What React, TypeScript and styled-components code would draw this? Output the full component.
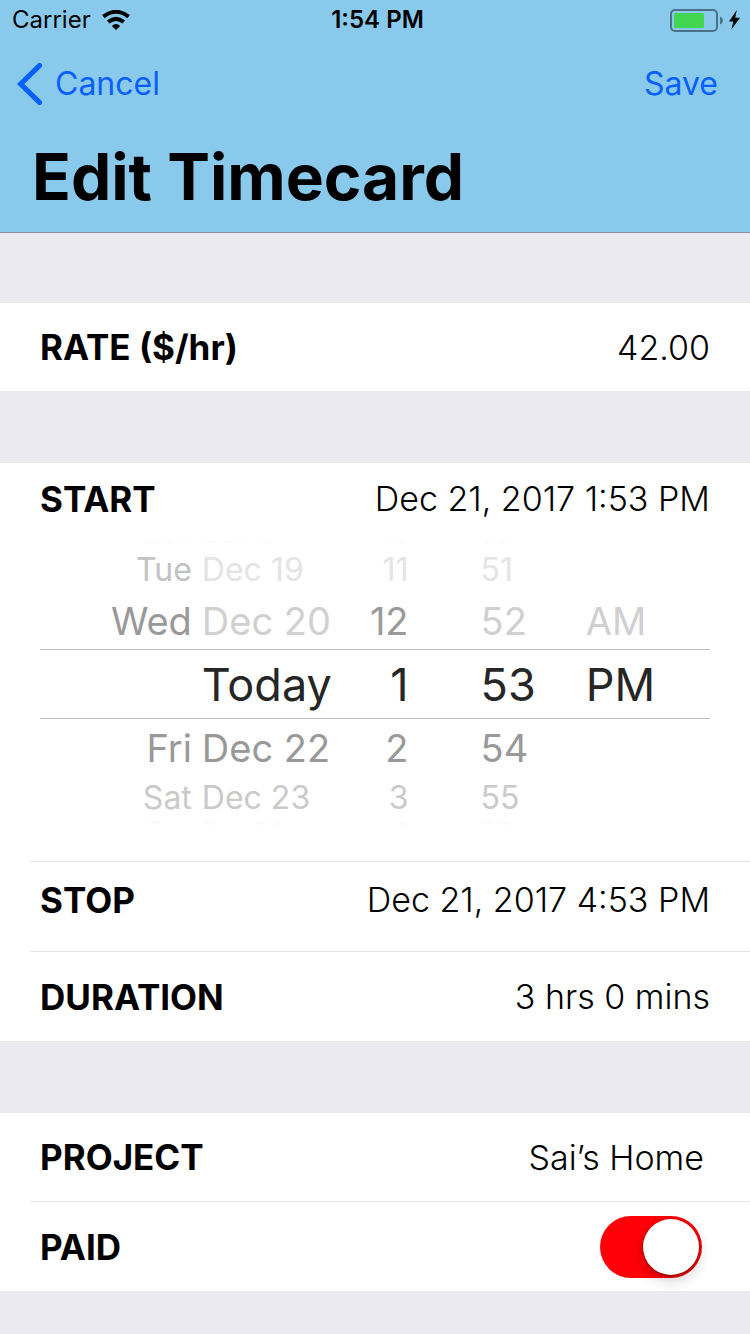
import React, { useState } from "react";
import styled, { createGlobalStyle } from "styled-components";

const GlobalStyle = createGlobalStyle`
  *, *::before, *::after { box-sizing: border-box; }
  body {
    margin: 0;
    background: #ebeaf0;
    color: #000;
    font-family: Inter, Roboto, "Liberation Sans", sans-serif;
  }
  button, input { font: inherit; color: inherit; }
`;

const Header = styled.header`
  background: #89caec;
  border-bottom: 1px solid #8e909c;
`;

const StatusBar = styled.div`
  display: grid;
  grid-template-columns: 1fr auto 1fr;
  align-items: center;
  height: 40px;
  padding: 0 9px 0 12px;
  font-size: 24px;
  line-height: 40px;
`;

const Carrier = styled.div`
  display: flex;
  align-items: center;
  gap: 11px;
`;

const Clock = styled.div`
  padding-left: 2px;
  font-weight: 600;
`;

const Power = styled.div`
  display: flex;
  justify-content: flex-end;
`;

const NavBar = styled.nav`
  display: flex;
  align-items: center;
  justify-content: space-between;
  height: 88px;
  padding: 0 32px 0 16px;
`;

const NavButton = styled.button`
  display: flex;
  align-items: center;
  gap: 12px;
  padding: 0;
  border: 0;
  background: none;
  color: #0a60ff;
  font-size: 32px;
  line-height: 44px;
  cursor: pointer;
`;

const Title = styled.h1`
  margin: 0;
  padding: 9px 32px 15px;
  font-size: 64px;
  font-weight: 700;
  line-height: 80px;
`;

const Form = styled.main`
  display: flex;
  flex-direction: column;
  gap: 72px;
  padding: 70px 0 43px;
`;

const Section = styled.section`
  background: #fff;
`;

const Row = styled.div<{ $tall?: boolean }>`
  display: flex;
  align-items: center;
  justify-content: space-between;
  gap: 24px;
  height: ${(p) => (p.$tall ? 89 : 88)}px;
  padding: 0 40px;
`;

const DateRow = styled(Row)<{ $open?: boolean }>`
  height: ${(p) => (p.$open ? 72 : 89)}px;
  padding-bottom: ${(p) => (p.$open ? 0 : 14)}px;
`;

const Divider = styled.hr`
  height: 1px;
  margin: 0 0 0 30px;
  border: 0;
  background: #e6e6ea;
`;

const Label = styled.label`
  flex: none;
  font-size: 35px;
  font-weight: 700;
  line-height: 44px;
`;

const Value = styled.output`
  font-size: 34px;
  font-weight: 300;
  line-height: 44px;
  white-space: nowrap;
`;

const Field = styled.input<{ $inset?: boolean }>`
  flex: 1;
  min-width: 0;
  height: 44px;
  padding: 0 ${(p) => (p.$inset ? 6 : 0)}px 0 0;
  border: 0;
  outline: 0;
  background: none;
  font-size: 34px;
  font-weight: 300;
  text-align: right;
`;

const Picker = styled.div`
  display: grid;
  grid-template-columns: 295fr 75fr 125fr 175fr;
  padding: 6px 40px 36px;
`;

const Wheel = styled.div<{ $inset?: number }>`
  display: flex;
  flex-direction: column;
  & > button { padding-left: ${(p) => p.$inset || 0}px; }
`;

const levels = [
  { height: 6, size: 24 },
  { height: 45, size: 32 },
  { height: 57, size: 38 },
  { height: 70, size: 45 },
  { height: 57, size: 38 },
  { height: 43, size: 32 },
  { height: 6, size: 24 },
];

const Cell = styled.button<{ $level: number; $tone: string; $align?: "right" }>`
  display: flex;
  align-items: ${(p) => (p.$level === 0 ? "flex-end" : p.$level === 6 ? "flex-start" : "center")};
  justify-content: ${(p) => (p.$align === "right" ? "flex-end" : "flex-start")};
  height: ${(p) => levels[p.$level].height}px;
  padding: 0;
  overflow: hidden;
  border: 0 solid #bebebe;
  border-width: ${(p) => (p.$level === 3 ? "1px 0" : "0")};
  background: none;
  color: ${(p) => p.$tone};
  font-size: ${(p) => levels[p.$level].size}px;
  line-height: 1;
  white-space: nowrap;
`;

const Weekday = styled.span<{ $tone: string }>`
  flex: 1;
  padding-right: 10px;
  color: ${(p) => p.$tone};
  text-align: right;
`;

const Day = styled.span`
  flex: 0 0 132px;
  text-align: left;
`;

const Switch = styled.input`
  appearance: none;
  position: relative;
  width: 102px;
  height: 62px;
  margin: 0 8px 0 0;
  border-radius: 31px;
  background: #ff0008;
  cursor: pointer;

  &::after {
    content: "";
    position: absolute;
    top: 3px;
    left: 3px;
    width: 56px;
    height: 56px;
    border-radius: 50%;
    background: #fff;
    box-shadow: 0 1px 3px rgba(0, 0, 0, 0.45), 0 6px 14px rgba(0, 0, 0, 0.18);
  }
  &:checked::after { left: 43px; }
  &:not(:checked) { background: #e5e5ea; }
`;

const WifiIcon = () => (
  <svg width="28" height="20" viewBox="0 0 28 20" aria-hidden="true">
    <path d="M1.4 6.6 Q14 -3 26.6 6.6" fill="none" stroke="#000" strokeWidth="4" />
    <path d="M6.2 12 Q14 5.8 21.8 12" fill="none" stroke="#000" strokeWidth="4" />
    <path d="M9.8 16 Q14 11.8 18.2 16 L14 20 Z" fill="#000" />
  </svg>
);

const BatteryIcon = () => (
  <svg width="71" height="24" viewBox="0 0 71 24" aria-hidden="true">
    <rect x="1" y="2" width="46" height="21" rx="4" fill="none" stroke="#4d7184" strokeWidth="2" />
    <rect x="4" y="5" width="30" height="15" rx="1.5" fill="#43d651" />
    <path d="M50 8.5 Q53 10 53 12.5 Q53 15 50 16.5 Z" fill="#4d7184" />
    <path d="M66.8 2 L59 13.4 H63.4 L61.4 21.6 L70 9.8 H65.2 Z" fill="#000" />
  </svg>
);

const BackIcon = () => (
  <svg width="27" height="44" viewBox="0 0 27 44" aria-hidden="true">
    <path d="M23.5 3.6 L4.7 22 L23.5 40.4" fill="none" stroke="#0a60ff" strokeWidth="5.2" strokeLinecap="round" />
  </svg>
);

const ghost = "#fafafa";
const ink = "#262626";

const dates = [
  { weekday: "Mon", day: "Dec 18", dayTone: "#fcfcfc", tone: ghost },
  { weekday: "Tue", day: "Dec 19", dayTone: "#e4e4e4", tone: "#c2c2c2" },
  { weekday: "Wed", day: "Dec 20", dayTone: "#d0d0d0", tone: "#999999" },
  { weekday: "", day: "Today", dayTone: ink, tone: ink },
  { weekday: "Fri", day: "Dec 22", dayTone: "#999999", tone: "#999999" },
  { weekday: "Sat", day: "Dec 23", dayTone: "#cacaca", tone: "#cacaca" },
  { weekday: "Sun", day: "Dec 24", dayTone: ghost, tone: ghost },
];
const hours = ["10", "11", "12", "1", "2", "3", "4"];
const hourTones = [ghost, "#e4e4e4", "#999999", ink, "#999999", "#cacaca", ghost];
const minutes = ["50", "51", "52", "53", "54", "55", "56"];
const minuteTones = [ghost, "#e4e4e4", "#d0d0d0", ink, "#999999", "#cacaca", ghost];
const periods = ["", "", "AM", "PM", "", "", ""];

const DateTimePicker = () => (
  <Picker role="group" aria-label="Start date and time">
    <Wheel>
      {dates.map((d, i) => (
        <Cell key={i} type="button" $level={i} $tone={d.dayTone}>
          <Weekday $tone={d.tone}>{d.weekday}</Weekday>
          <Day>{d.day}</Day>
        </Cell>
      ))}
    </Wheel>
    <Wheel>
      {hours.map((h, i) => (
        <Cell key={h} type="button" $level={i} $tone={hourTones[i]} $align="right">{h}</Cell>
      ))}
    </Wheel>
    <Wheel $inset={72}>
      {minutes.map((m, i) => (
        <Cell key={m} type="button" $level={i} $tone={minuteTones[i]}>{m}</Cell>
      ))}
    </Wheel>
    <Wheel $inset={50}>
      {periods.map((p, i) => (
        <Cell key={i} type="button" disabled={!p} $level={i} $tone={i === 3 ? ink : "#d0d0d0"}>{p}</Cell>
      ))}
    </Wheel>
  </Picker>
);

export default function App() {
  const [rate, setRate] = useState("42.00");
  const [project, setProject] = useState("Sai’s Home");
  const [paid, setPaid] = useState(true);

  return (
    <>
      <GlobalStyle />
      <Header>
        <StatusBar>
          <Carrier>Carrier <WifiIcon /></Carrier>
          <Clock>1:54 PM</Clock>
          <Power><BatteryIcon /></Power>
        </StatusBar>
        <NavBar>
          <NavButton type="button"><BackIcon />Cancel</NavButton>
          <NavButton type="button">Save</NavButton>
        </NavBar>
        <Title>Edit Timecard</Title>
      </Header>
      <Form>
        <Section>
          <Row>
            <Label htmlFor="rate">RATE ($/hr)</Label>
            <Field id="rate" value={rate} onChange={(e) => setRate(e.target.value)} />
          </Row>
        </Section>
        <Section>
          <DateRow $open>
            <Label htmlFor="start">START</Label>
            <Value id="start">Dec 21, 2017 1:53 PM</Value>
          </DateRow>
          <DateTimePicker />
          <Divider />
          <DateRow>
            <Label htmlFor="stop">STOP</Label>
            <Value id="stop">Dec 21, 2017 4:53 PM</Value>
          </DateRow>
          <Divider />
          <Row $tall>
            <Label htmlFor="duration">DURATION</Label>
            <Value id="duration">3 hrs 0 mins</Value>
          </Row>
        </Section>
        <Section>
          <Row>
            <Label htmlFor="project">PROJECT</Label>
            <Field id="project" $inset value={project} onChange={(e) => setProject(e.target.value)} />
          </Row>
          <Divider />
          <Row $tall>
            <Label htmlFor="paid">PAID</Label>
            <Switch id="paid" type="checkbox" role="switch" checked={paid} onChange={(e) => setPaid(e.target.checked)} />
          </Row>
        </Section>
      </Form>
    </>
  );
}
